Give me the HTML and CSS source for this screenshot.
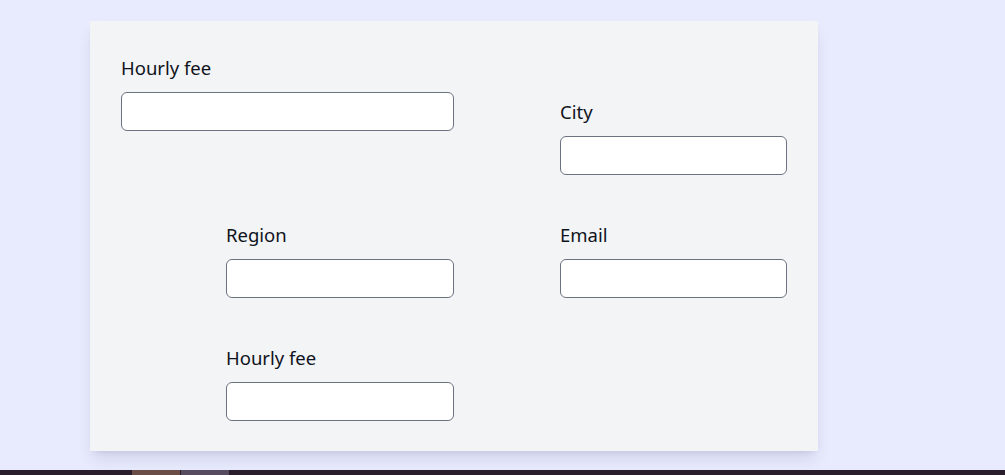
FILE: index.html
```html
<!DOCTYPE html>
<html lang="en">
<head>
<meta charset="utf-8">
<title>Form</title>
<link rel="stylesheet" href="styles.css">
</head>
<body>
<div class="page">
  <form class="card">
    <div class="field field-wide">
      <label class="label" for="fee1">Hourly fee</label>
      <input class="input" id="fee1" type="text">
    </div>
    <div class="field field-city">
      <label class="label" for="city">City</label>
      <input class="input" id="city" type="text">
    </div>
    <div class="field field-left">
      <label class="label" for="region">Region</label>
      <input class="input" id="region" type="text">
    </div>
    <div class="field field-right">
      <label class="label" for="email">Email</label>
      <input class="input" id="email" type="text">
    </div>
    <div class="field field-left">
      <label class="label" for="fee2">Hourly fee</label>
      <input class="input" id="fee2" type="text">
    </div>
  </form>
</div>
<div class="taskbar">
  <span class="seg seg-a"></span>
  <span class="seg seg-b"></span>
</div>
</body>
</html>
```
FILE: styles.css
```css
html, body {
  margin: 0;
  padding: 0;
}
body {
  background: #e8eafd;
  font-family: "Noto Sans", "Open Sans", sans-serif;
  color: #0f1320;
  height: 475px;
  overflow: hidden;
  position: relative;
}
.page {
  padding: 21px 0 0 90px;
}
.card {
  width: 728px;
  box-sizing: border-box;
  background: #f3f4f6;
  padding: 36px 31px 30px 31px;
  display: grid;
  grid-template-columns: 105px 228px 106px 227px;
  row-gap: 49px;
  box-shadow: 0 10px 15px -3px rgba(40, 40, 90, 0.12), 0 4px 6px -4px rgba(40, 40, 90, 0.12);
}
.field {
  display: flex;
  flex-direction: column;
  gap: 13px;
}
.field-wide {
  grid-column: 1 / 3;
}
.field-city {
  grid-column: 4;
  margin-top: 44px;
}
.field-left {
  grid-column: 2;
}
.field-right {
  grid-column: 4;
}
.label {
  font-size: 18.5px;
  line-height: 22px;
  height: 22px;
}
.input {
  height: 39px;
  box-sizing: border-box;
  border: 1px solid #6b7280;
  border-radius: 6px;
  background: #ffffff;
  margin: 0;
  padding: 0 12px;
  font: inherit;
}
.taskbar {
  position: absolute;
  left: 0;
  right: 0;
  bottom: 0;
  height: 5px;
  background: #2a1d2c;
  display: flex;
  padding-left: 132px;
  gap: 1px;
}
.seg {
  display: block;
  width: 48px;
  height: 5px;
}
.seg-a {
  background: #6a4d47;
}
.seg-b {
  background: #574b5f;
}
```
